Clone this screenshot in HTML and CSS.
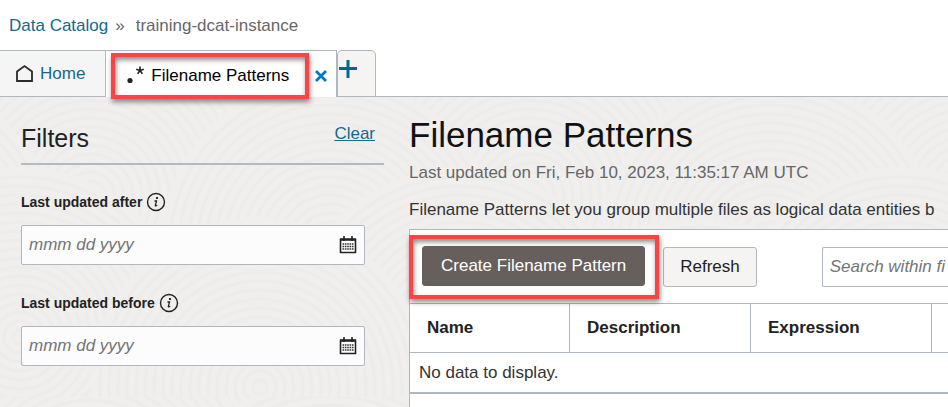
FILE: index.html
```html
<!DOCTYPE html>
<html lang="en">
<head>
<meta charset="utf-8">
<meta name="viewport" content="width=device-width, initial-scale=1">
<title>Filename Patterns</title>
<link rel="stylesheet" href="styles.css">
</head>
<body>
<nav class="breadcrumb" aria-label="Breadcrumb">
  <a href="#catalog">Data Catalog</a><span class="sep">»</span><span>training-dcat-instance</span>
</nav>
<nav class="tabs" aria-label="Open tabs">
  <a class="tab tab-home" href="#home">
    <svg width="20" height="20" viewBox="0 0 20 20" fill="none" stroke="#2b2b2b" stroke-width="1.800" aria-hidden="true"><path d="M2 17V7.500L9.500 2 17 7.500V17z"/></svg>
    <span>Home</span>
  </a>
  <div class="tab tab-active">
    <a class="tab-title highlight" href="#patterns">
      <svg width="20" height="22" viewBox="0 0 20 22" aria-hidden="true"><circle cx="3" cy="15.500" r="2.600" fill="#222"/><path d="M13 5.500V1.500M13 5.500l3.800-1.200M13 5.500l2.400 3.200M13 5.500l-2.400 3.200M13 5.500l-3.800-1.200" stroke="#222" stroke-width="1.600"/></svg>
      <span>Filename Patterns</span>
    </a>
    <button class="tab-close" type="button" aria-label="Close tab">
      <svg width="12" height="12" viewBox="0 0 12 12" stroke="#0077c8" stroke-width="2.800"><path d="M1 1l10 10M11 1L1 11"/></svg>
    </button>
  </div>
  <button class="tab tab-add" type="button" aria-label="Add tab">
    <svg width="18" height="18" viewBox="0 0 18 18" stroke="#00688c" stroke-width="3"><path d="M9 0v18M0 8.500h18"/></svg>
  </button>
</nav>
<div class="workspace">
  <svg class="texture" width="100%" height="100%" aria-hidden="true">
    <defs>
      <g id="rings" fill="none" stroke="#edecea" stroke-width="3">
        <circle r="170" fill="#f0efed" stroke="none"/><circle r="160"/><circle r="151"/><circle r="142"/><circle r="133"/><circle r="124"/><circle r="115"/><circle r="106"/><circle r="97"/><circle r="88"/><circle r="79"/><circle r="70"/><circle r="61"/><circle r="52"/><circle r="43"/><circle r="34"/><circle r="25"/><circle r="16"/><circle r="7"/>
      </g>
      <pattern id="waves" width="440" height="300" patternUnits="userSpaceOnUse">
        <use href="#rings" x="20" y="-60"/><use href="#rings" x="460" y="-60"/>
        <use href="#rings" x="260" y="-10"/>
        <use href="#rings" x="90" y="100"/><use href="#rings" x="530" y="100"/>
        <use href="#rings" x="330" y="150"/><use href="#rings" x="-110" y="150"/>
        <use href="#rings" x="20" y="240"/><use href="#rings" x="460" y="240"/>
        <use href="#rings" x="260" y="290"/>
      </pattern>
    </defs>
    <rect width="100%" height="100%" fill="url(#waves)"/>
  </svg>
  <aside class="filters">
    <header class="filters-head">
      <h2>Filters</h2>
      <a href="#clear">Clear</a>
    </header>
    <div class="field">
      <div class="field-label">
        <label for="after">Last updated after</label>
        <svg width="20" height="20" viewBox="0 0 20 20" aria-hidden="true"><circle cx="10" cy="10" r="8.500" fill="none" stroke="#222" stroke-width="1.400"/><circle cx="11" cy="6" r="1.100"/><path d="M8.500 9h2L9.300 13.600q0 .8 1.900-.4" fill="none" stroke="#222" stroke-width="1.300"/></svg>
      </div>
      <div class="date-box">
        <input id="after" type="text" placeholder="mmm dd yyyy">
        <svg width="18" height="18" viewBox="0 0 18 18" aria-hidden="true"><path d="M1.500 3.500h15v13h-15z" fill="none" stroke="#222" stroke-width="1.600"/><path d="M1 3.500h16" stroke="#222" stroke-width="2.400"/><path d="M5 0v5M13 0v5" stroke="#222" stroke-width="1.600"/><path d="M3.500 8h11M3.500 10.500h11M3.500 13h11" stroke="#333" stroke-width="1.600" stroke-dasharray="1.600 .75"/></svg>
      </div>
    </div>
    <div class="field">
      <div class="field-label">
        <label for="before">Last updated before</label>
        <svg width="20" height="20" viewBox="0 0 20 20" aria-hidden="true"><circle cx="10" cy="10" r="8.500" fill="none" stroke="#222" stroke-width="1.400"/><circle cx="11" cy="6" r="1.100"/><path d="M8.500 9h2L9.300 13.600q0 .8 1.900-.4" fill="none" stroke="#222" stroke-width="1.300"/></svg>
      </div>
      <div class="date-box">
        <input id="before" type="text" placeholder="mmm dd yyyy">
        <svg width="18" height="18" viewBox="0 0 18 18" aria-hidden="true"><path d="M1.500 3.500h15v13h-15z" fill="none" stroke="#222" stroke-width="1.600"/><path d="M1 3.500h16" stroke="#222" stroke-width="2.400"/><path d="M5 0v5M13 0v5" stroke="#222" stroke-width="1.600"/><path d="M3.500 8h11M3.500 10.500h11M3.500 13h11" stroke="#333" stroke-width="1.600" stroke-dasharray="1.600 .75"/></svg>
      </div>
    </div>
  </aside>
  <main class="content">
    <h1>Filename Patterns</h1>
    <p class="updated">Last updated on Fri, Feb 10, 2023, 11:35:17 AM UTC</p>
    <p class="intro">Filename Patterns let you group multiple files as logical data entities b</p>
    <section class="panel">
      <div class="toolbar">
        <div class="create highlight"><button class="btn btn-primary" type="button">Create Filename Pattern</button></div>
        <button class="btn" type="button">Refresh</button>
        <input class="search" type="text" aria-label="Search" placeholder="Search within fi">
      </div>
      <table>
        <thead><tr><th class="col-name">Name</th><th class="col-text">Description</th><th class="col-text">Expression</th><th></th></tr></thead>
        <tbody><tr><td colspan="4">No data to display.</td></tr></tbody>
      </table>
    </section>
  </main>
</div>
</body>
</html>
```

FILE: styles.css
```css
* { box-sizing: border-box; }

:root {
  --line: #b1b7c1;
  --link: #14698c;
  --ink: #222;
}

body {
  margin: 0;
  min-height: 100vh;
  display: flex;
  flex-direction: column;
  overflow: hidden;
  background: #fff;
  color: var(--ink);
  font: 17px/20px "Liberation Sans", Arial, sans-serif;
}

button, input { font: inherit; color: inherit; }
a { color: var(--link); text-decoration: none; }
h1, h2, p { margin: 0; font-weight: 400; }
svg { flex: none; }

.breadcrumb {
  display: flex;
  padding: 16px 9px 14px;
  color: #666;
}
.sep { margin: 0 11px 0 7px; }

.tabs {
  position: relative;
  z-index: 1;
  display: flex;
  height: 47px;
  background: linear-gradient(var(--line), var(--line)) bottom / 100% 1px no-repeat;
}
.tab {
  display: flex;
  align-items: center;
  border: 1px solid var(--line);
  border-left: 0;
}
.tab-home {
  gap: 5px;
  padding: 1px 20px 0 15px;
  background: #f5f5f5;
}
.tab-active {
  padding: 4px 9px 0 5px;
  border-bottom: 0;
  background: #fff;
}
.tab-title {
  display: flex;
  align-items: center;
  gap: 4px;
  height: 46px;
  padding: 0 16px 0 12px;
  color: #000;
}
.highlight {
  flex: none;
  position: relative;
  border: 4px solid #fd4343;
  box-shadow: 1px 3px 5px rgba(0, 0, 0, .45), inset 1px 3px 5px rgba(0, 0, 0, .45);
}
.tab-close, .tab-add { cursor: pointer; }
.tab-close {
  display: flex;
  margin-left: 6px;
  padding: 0;
  border: 0;
  background: none;
}
.tab-add {
  align-items: flex-start;
  width: 39px;
  padding: 9px 1px;
  border-left: 1px solid var(--line);
  border-radius: 5px 5px 0 0;
  background: #f5f4f2;
}

.workspace {
  position: relative;
  flex: 1;
  display: flex;
  gap: 25px;
  padding-left: 21px;
  background: #f0efed;
}
.texture { position: absolute; inset: 0; }

.filters {
  position: relative;
  flex: 0 0 363px;
  padding-top: 26px;
}
.filters-head {
  display: flex;
  justify-content: space-between;
  padding: 0 9px 10px 0;
  border-bottom: 2px solid #b0bbc6;
}
.filters-head h2 { font-size: 25px; line-height: 30px; }
.filters-head a { line-height: 22px; text-decoration: underline; }
.field { padding: 27px 19px 0 0; }
.field + .field { padding-top: 28px; }
.field-label {
  display: flex;
  align-items: center;
  gap: 4px;
  font-size: 14px;
  font-weight: 700;
}
.date-box {
  display: flex;
  align-items: center;
  height: 40px;
  margin-top: 13px;
  padding: 0 7px;
  border: 1px solid var(--line);
  border-radius: 2px;
  background: #fcfcfc;
}
.date-box input {
  flex: 1;
  min-width: 0;
  padding: 0;
  border: 0;
  background: none;
}
::placeholder { color: #757575; font-style: italic; opacity: 1; }

.content {
  position: relative;
  flex: 1;
  min-width: 0;
  display: flex;
  flex-direction: column;
  padding-top: 17px;
  white-space: nowrap;
}
h1 { font-size: 35px; line-height: 42px; color: #111; }
.updated { margin-top: 7px; color: #666; }
.intro { margin-top: 17px; color: #333; }

.panel {
  flex: 1;
  margin-top: 9px;
  border: solid var(--line);
  border-width: 1px 0 0 1px;
  background: #fff;
}
.toolbar {
  display: flex;
  align-items: center;
  padding-top: 5px;
}
.create {
  margin: 0 4px 0 -1px;
  padding: 7px 10px 9px 9px;
}
.btn {
  flex: none;
  height: 40px;
  padding: 0 16px;
  border: 1px solid var(--line);
  border-radius: 3px;
  background: #f5f4f2;
}
.btn-primary {
  padding: 0 18px;
  border-color: #665f5b;
  background: #665f5b;
  color: #fff;
}
.search {
  flex: 1;
  min-width: 0;
  height: 40px;
  margin-left: 65px;
  padding: 0 0 0 7px;
  border: solid var(--line);
  border-width: 1px 0 1px 1px;
  border-radius: 2px 0 0 2px;
}

table {
  width: 100%;
  margin-top: 4px;
  border-collapse: separate;
  border-spacing: 0;
  table-layout: fixed;
  border-top: 1px solid var(--line);
}
th {
  height: 49px;
  padding: 0 17px;
  border-right: 1px solid var(--line);
  border-bottom: 1px solid var(--line);
  text-align: left;
}
.col-name { width: 160px; }
.col-text { width: 181px; }
th:last-child { padding: 0; border-right: 0; }
td {
  height: 41px;
  padding: 0 9px;
  border-bottom: 2px solid var(--line);
  color: #333;
}
```
